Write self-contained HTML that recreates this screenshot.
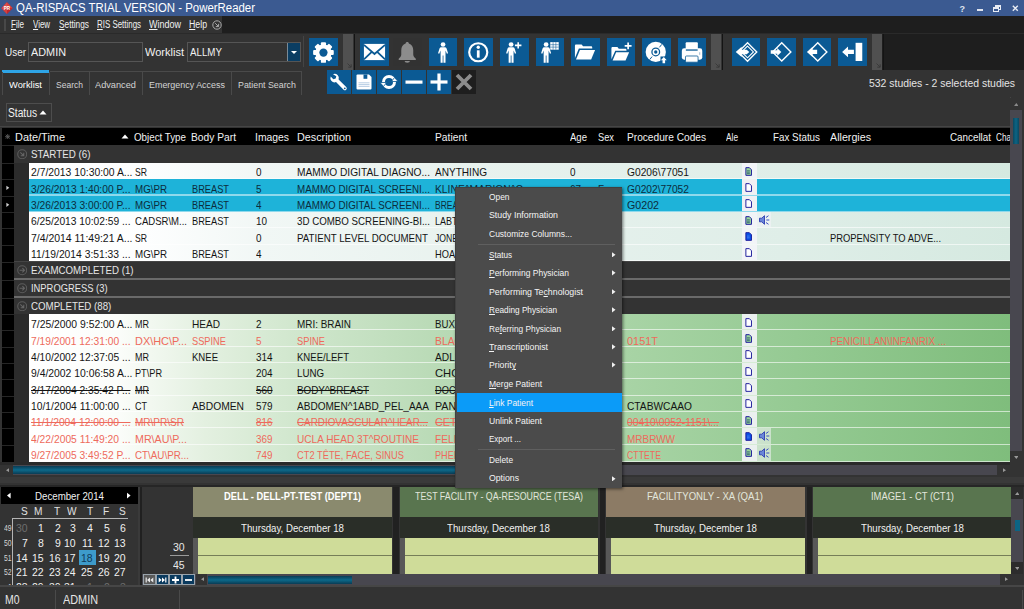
<!DOCTYPE html>
<html><head><meta charset="utf-8"><title>QA-RISPACS TRIAL VERSION - PowerReader</title>
<style>
html,body{margin:0;padding:0;}
body{width:1024px;height:609px;overflow:hidden;background:#333333;position:relative;
 font-family:"Liberation Sans",sans-serif;}
div,span,svg{position:absolute;box-sizing:border-box;}
.t{white-space:nowrap;line-height:16px;height:16px;transform-origin:0 50%;}
u{text-decoration:underline;text-underline-offset:1px;text-decoration-thickness:0.700px;}
.s{text-decoration:line-through;}
.tb{background:#0b5a94;}
</style></head><body>

<div style="left:0px;top:0px;width:1024px;height:16px;background:#3b5a91;"></div>
<svg style="left:0.800px;top:1.600px" width="12" height="12.400" viewBox="0 0 12 12.400"><polygon points="6,0.300 11.700,6.200 6,12.100 0.300,6.200" fill="#c4262c"/><polygon points="6,0.300 11.700,6.200 6,6.200 0.300,6.200" fill="#d8403e"/><polygon points="6,0.300 6,12.100 0.300,6.200" fill="#e05a52" opacity=".55"/><text x="6" y="8" font-family="Liberation Sans, sans-serif" font-size="4.600" font-weight="bold" fill="#fff" text-anchor="middle">PR</text></svg>
<span class="t" style="left:16.00px;top:0.20px;font-size:12px;color:#ffffff;transform:scaleX(0.9515);">QA-RISPACS TRIAL VERSION - PowerReader</span>
<span class="t" style="left:959.55px;top:0.50px;font-size:9px;color:#dfe4ee;transform:scaleX(1.0000);font-weight:bold;">?</span>
<div style="left:977.2px;top:9px;width:5.6px;height:2.2px;background:#dfe4ee;"></div>
<div style="left:995px;top:5px;width:6px;height:5px;border:1px solid #e8ecf4;border-top-width:2px;"></div>
<div style="left:993px;top:7px;width:6px;height:5px;background:#3b5a91;border:1px solid #e8ecf4;border-top-width:2px;"></div>
<svg style="left:1012.300px;top:5.200px" width="6.600" height="6.400" viewBox="0 0 9 9"><path d="M1 1L8 8M8 1L1 8" stroke="#e8ecf4" stroke-width="2"/></svg>
<div style="left:0px;top:16px;width:1024px;height:17px;background:#1e1e1e;"></div>
<div style="left:0px;top:16px;width:222px;height:17px;background:#333333;"></div>
<div style="left:3.5px;top:19px;width:2px;height:12px;background:#484848;"></div>
<span class="t" style="left:11.00px;top:17.00px;font-size:10px;color:#f1f1f1;transform:scaleX(0.9000);transform:scaleX(0.8068);"><u>F</u>ile</span>
<span class="t" style="left:33.00px;top:17.00px;font-size:10px;color:#f1f1f1;transform:scaleX(0.9000);transform:scaleX(0.7909);"><u>V</u>iew</span>
<span class="t" style="left:59.00px;top:17.00px;font-size:10px;color:#f1f1f1;transform:scaleX(0.9000);transform:scaleX(0.8303);"><u>S</u>ettings</span>
<span class="t" style="left:97.00px;top:17.00px;font-size:10px;color:#f1f1f1;transform:scaleX(0.9000);transform:scaleX(0.7916);"><u>R</u>IS Settings</span>
<span class="t" style="left:149.00px;top:17.00px;font-size:10px;color:#f1f1f1;transform:scaleX(0.9000);transform:scaleX(0.8997);"><u>W</u>indow</span>
<span class="t" style="left:189.00px;top:17.00px;font-size:10px;color:#f1f1f1;transform:scaleX(0.9000);transform:scaleX(0.8752);"><u>H</u>elp</span>
<svg style="left:212px;top:20px" width="10" height="10" viewBox="0 0 10 10"><circle cx="5" cy="5" r="4.2" fill="none" stroke="#aaa" stroke-width="1"/><path d="M3.2 3.2L6.4 6.4M6.6 3.8V6.6H3.8" stroke="#aaa" stroke-width="1" fill="none"/></svg>
<div style="left:0px;top:33px;width:1024px;height:37px;background:#333333;"></div>
<div style="left:882px;top:34px;width:142px;height:36px;background:#1e1e1e;"></div>
<div style="left:0px;top:33px;width:1024px;height:1px;background:#2a2a2a;"></div>
<span class="t" style="left:5.00px;top:43.60px;font-size:11px;color:#f1f1f1;transform:scaleX(0.9042);">User</span>
<div style="left:28px;top:42px;width:115px;height:20px;background:#333333;border:1px solid #555;"></div>
<span class="t" style="left:31.00px;top:44.00px;font-size:11px;color:#f1f1f1;transform:scaleX(0.9875);">ADMIN</span>
<span class="t" style="left:145.00px;top:43.60px;font-size:11px;color:#f1f1f1;transform:scaleX(1.0024);">Worklist</span>
<div style="left:187px;top:42px;width:114px;height:20px;background:#333333;border:1px solid #555;"></div>
<span class="t" style="left:190.00px;top:44.00px;font-size:11px;color:#f1f1f1;transform:scaleX(0.8871);">ALLMY</span>
<div style="left:287px;top:43px;width:13px;height:18px;background:#0a3d62;border-left:1px solid #7a8a96;"></div>
<svg style="left:290px;top:50px" width="8" height="5" viewBox="0 0 8 5"><polygon points="1,1 7,1 4,4" fill="#fff"/></svg>
<div style="left:343px;top:34px;width:10px;height:36px;background:#505050;"></div>
<svg style="left:347px;top:63px" width="5" height="5" viewBox="0 0 5 5"><path d="M0.5 0.5L3.800 3.800M4.200 1.200V4.200H1.200" stroke="#383838" stroke-width=".9" fill="none"/></svg>
<div style="left:354px;top:34px;width:1px;height:36px;background:#141414;"></div>
<div style="left:711px;top:34px;width:10px;height:36px;background:#505050;"></div>
<svg style="left:715px;top:63px" width="5" height="5" viewBox="0 0 5 5"><path d="M0.5 0.5L3.800 3.800M4.200 1.200V4.200H1.200" stroke="#383838" stroke-width=".9" fill="none"/></svg>
<div style="left:722px;top:34px;width:1px;height:36px;background:#141414;"></div>
<div style="left:872px;top:34px;width:10px;height:36px;background:#505050;"></div>
<svg style="left:876px;top:63px" width="5" height="5" viewBox="0 0 5 5"><path d="M0.5 0.5L3.800 3.800M4.200 1.200V4.200H1.200" stroke="#383838" stroke-width=".9" fill="none"/></svg>
<div style="left:883px;top:34px;width:1px;height:36px;background:#141414;"></div>
<div style="left:309px;top:37.8px;width:28.5px;height:28.5px;background:#0b5a94;"></div>
<svg style="left:309px;top:37.800px" width="28.500" height="28.500" viewBox="0 0 29 29"><g transform="translate(14.700 14.800)"><g fill="#fff"><rect x="-2.6" y="-10.5" width="5.2" height="21" rx="1" transform="rotate(0)"/><rect x="-2.6" y="-10.5" width="5.2" height="21" rx="1" transform="rotate(45)"/><rect x="-2.6" y="-10.5" width="5.2" height="21" rx="1" transform="rotate(90)"/><rect x="-2.6" y="-10.5" width="5.2" height="21" rx="1" transform="rotate(135)"/><circle r="8.3"/></g><circle r="4.2" fill="#0b5a94"/></g></svg>
<div style="left:360px;top:37.8px;width:28.5px;height:28.5px;background:#0b5a94;"></div>
<svg style="left:360px;top:37.800px" width="28.500" height="28.500" viewBox="0 0 29 29"><rect x="4" y="6" width="21.500" height="16.500" fill="#fff"/><path d="M4 7L14.750 16.300L25.500 7M4 21.800L12 14M25.500 21.800L17.500 14" stroke="#0b5a94" stroke-width="1.800" fill="none"/></svg>
<div style="left:393px;top:37.8px;width:28.5px;height:28.5px;background:#323232;"></div>
<svg style="left:393px;top:37.800px" width="28.500" height="28.500" viewBox="0 0 29 29"><path d="M14.500 4c-1 0-1.600.6-1.600 1.500-3 .9-4.500 3.600-4.500 7v4.300c0 1.900-1.300 3.200-2.600 4.200v1.300h17.400v-1.300c-1.300-1-2.600-2.300-2.600-4.200v-4.300c0-3.400-1.500-6.100-4.500-7 0-.9-.6-1.500-1.600-1.500z" fill="#8c8c8c"/><path d="M11.800 23.300h5.400a2.700 1.800 0 0 1-5.400 0z" fill="#8c8c8c"/></svg>
<div style="left:428.5px;top:37.8px;width:28.5px;height:28.5px;background:#0b5a94;"></div>
<svg style="left:428.5px;top:37.800px" width="28.500" height="28.500" viewBox="0 0 29 29"><g transform="translate(14.3 4.2) scale(1.0)" fill="#fff"><circle cx="0" cy="2.400" r="2.400"/><path d="M-1.800 5.200L1.800 5.200Q3.200 5.200 3.600 6.400L5.100 11.200L3.900 11.800L2.500 8.600L2.500 21L0.400 21L0.400 13.500L-0.400 13.500L-0.400 21L-2.500 21L-2.500 8.600L-3.900 11.800L-5.100 11.200L-3.600 6.400Q-3.200 5.200 -1.800 5.200Z"/></g></svg>
<div style="left:464px;top:37.8px;width:28.5px;height:28.5px;background:#0b5a94;"></div>
<svg style="left:464px;top:37.800px" width="28.500" height="28.500" viewBox="0 0 29 29"><circle cx="14.5" cy="14.5" r="9.2" fill="none" stroke="#fff" stroke-width="2.2"/><rect x="13.100" y="12.500" width="2.8" height="7.5" fill="#fff"/><circle cx="14.5" cy="9.400" r="1.700" fill="#fff"/></svg>
<div style="left:500px;top:37.8px;width:28.5px;height:28.5px;background:#0b5a94;"></div>
<svg style="left:500px;top:37.800px" width="28.500" height="28.500" viewBox="0 0 29 29"><g transform="translate(11.3 4.2) scale(1.0)" fill="#fff"><circle cx="0" cy="2.400" r="2.400"/><path d="M-1.800 5.200L1.800 5.200Q3.200 5.200 3.600 6.400L5.100 11.200L3.900 11.800L2.500 8.600L2.500 21L0.400 21L0.400 13.500L-0.400 13.500L-0.400 21L-2.500 21L-2.500 8.600L-3.900 11.800L-5.100 11.200L-3.600 6.400Q-3.200 5.200 -1.800 5.200Z"/></g><path d="M18.500 4.200v6.600M15.200 7.500h6.600" stroke="#fff" stroke-width="1.600"/></svg>
<div style="left:535.5px;top:37.8px;width:28.5px;height:28.5px;background:#0b5a94;"></div>
<svg style="left:535.5px;top:37.800px" width="28.500" height="28.500" viewBox="0 0 29 29"><g transform="translate(10.3 4.2) scale(1.0)" fill="#fff"><circle cx="0" cy="2.400" r="2.400"/><path d="M-1.800 5.200L1.800 5.200Q3.200 5.200 3.600 6.400L5.100 11.200L3.900 11.800L2.500 8.600L2.500 21L0.400 21L0.400 13.500L-0.400 13.500L-0.400 21L-2.500 21L-2.500 8.600L-3.900 11.800L-5.100 11.200L-3.600 6.400Q-3.200 5.200 -1.800 5.200Z"/></g><rect x="14.500" y="4.200" width="8.600" height="7.700" fill="#fff"/><path d="M14.500 6.800h8.600M14.500 9.300h8.600M17.400 4.200v7.700M20.200 4.200v7.700" stroke="#0b5a94" stroke-width=".55"/></svg>
<div style="left:571px;top:37.8px;width:28.5px;height:28.5px;background:#0b5a94;"></div>
<svg style="left:571px;top:37.800px" width="28.500" height="28.500" viewBox="0 0 29 29"><g transform="translate(-0.5 -0.7)"><path d="M4.500 8.500c0-.8.500-1.300 1.300-1.300h5.500l1.500 1.800h8c.8 0 1.300.5 1.300 1.300v1.200h-13.600l-4 9.500z" fill="#fff"/><path d="M9.600 13h15.400l-4 9.500h-15.400z" fill="#fff"/></g></svg>
<div style="left:606.5px;top:37.8px;width:28.5px;height:28.5px;background:#0b5a94;"></div>
<svg style="left:606.5px;top:37.800px" width="28.500" height="28.500" viewBox="0 0 29 29"><path d="M4.500 10.500c0-.8.500-1.300 1.300-1.300h4.800l1.400 1.700h6.500c.8 0 1.300.5 1.300 1.300v.8h-11.400l-3.900 8.500z" fill="#fff"/><path d="M9.300 14.400h13.200l-3.600 8.400h-13.200z" fill="#fff"/><path d="M21.500 4.500v7M18 8h7" stroke="#fff" stroke-width="1.700"/></svg>
<div style="left:642px;top:37.8px;width:28.5px;height:28.5px;background:#0b5a94;"></div>
<svg style="left:642px;top:37.800px" width="28.500" height="28.500" viewBox="0 0 29 29"><circle cx="14" cy="14.200" r="10.300" fill="#fff"/><circle cx="14" cy="14.200" r="3.900" fill="none" stroke="#0b5a94" stroke-width="1.300"/><circle cx="14" cy="14.200" r="1.700" fill="#0b5a94"/><path d="M17.700 9.500l2.400-3M7.900 21.900l2.400-3" stroke="#0b5a94" stroke-width="1"/><rect x="18.800" y="18.800" width="7" height="7" fill="#0b5a94"/><path d="M22.200 19.300l3 3.400h-1.700v3h-2.600v-3h-1.700z" fill="#fff"/></svg>
<div style="left:677.5px;top:37.8px;width:28.5px;height:28.5px;background:#0b5a94;"></div>
<svg style="left:677.5px;top:37.800px" width="28.500" height="28.500" viewBox="0 0 29 29"><rect x="7.800" y="4.400" width="12.400" height="7" rx="1" fill="#fff"/><rect x="3.900" y="10.500" width="20.800" height="11.600" rx="2.400" fill="#fff"/><rect x="8" y="11.600" width="12" height="1.300" fill="#0b5a94"/><rect x="7.600" y="18.300" width="12.800" height="6.300" rx="1" fill="#fff" stroke="#0b5a94" stroke-width=".8"/><rect x="21.600" y="14.500" width="1" height="2.600" fill="#9cb8d0"/></svg>
<div style="left:731.5px;top:37.8px;width:28.5px;height:28.5px;background:#0b5a94;"></div>
<svg style="left:731.5px;top:37.800px" width="28.500" height="28.500" viewBox="0 0 29 29"><path d="M15.8 4.799999999999999L25.200000000000003 14.2L15.8 23.6L6.4 14.2Z" fill="none" stroke="#fff" stroke-width="1.400"/><path d="M15.800 8.200L21.800 14.200L15.800 20.200L9.800 14.200Z" fill="none" stroke="#fff" stroke-width="1.100"/><path d="M3.800 14.200l6-5.200v2.900h5.200l2.600 2.300-2.600 2.300h-5.200v2.900z" fill="#fff"/></svg>
<div style="left:767px;top:37.8px;width:28.5px;height:28.5px;background:#0b5a94;"></div>
<svg style="left:767px;top:37.800px" width="28.500" height="28.500" viewBox="0 0 29 29"><path d="M15 4.899999999999999L24.3 14.2L15 23.5L5.699999999999999 14.2Z" fill="none" stroke="#fff" stroke-width="1.400"/><path d="M14.600 14.200l-4.200-4v2.300h-6.600v3.400h6.600v2.300z" fill="#fff"/></svg>
<div style="left:802.5px;top:37.8px;width:28.5px;height:28.5px;background:#0b5a94;"></div>
<svg style="left:802.5px;top:37.800px" width="28.500" height="28.500" viewBox="0 0 29 29"><path d="M15 4.899999999999999L24.3 14.2L15 23.5L5.699999999999999 14.2Z" fill="none" stroke="#fff" stroke-width="1.400"/><path d="M4 14.200l5.800-5.200v3h4.600v4.400h-4.600v3z" fill="#fff"/></svg>
<div style="left:838px;top:37.8px;width:28.5px;height:28.5px;background:#0b5a94;"></div>
<svg style="left:838px;top:37.800px" width="28.500" height="28.500" viewBox="0 0 29 29"><rect x="17.900" y="4.900" width="6.800" height="18.500" fill="#fff"/><path d="M4.200 14.200l6-5.500v3.300h6v4.400h-6v3.300z" fill="#fff"/></svg>
<div style="left:0px;top:70px;width:1024px;height:58px;background:#333333;"></div>
<span class="t" style="left:9.00px;top:76.70px;font-size:9.7px;color:#ffffff;transform:scaleX(0.9618);">Worklist</span>
<span class="t" style="left:55.70px;top:76.70px;font-size:9.7px;color:#d4d4d4;transform:scaleX(0.8785);">Search</span>
<span class="t" style="left:95.30px;top:76.70px;font-size:9.7px;color:#d4d4d4;transform:scaleX(0.9503);">Advanced</span>
<span class="t" style="left:148.70px;top:76.70px;font-size:9.7px;color:#d4d4d4;transform:scaleX(0.9214);">Emergency Access</span>
<span class="t" style="left:237.90px;top:76.70px;font-size:9.7px;color:#d4d4d4;transform:scaleX(0.9116);">Patient Search</span>
<div style="left:2px;top:70px;width:47px;height:3px;background:#2ea4e6;"></div>
<div style="left:49.5px;top:71px;width:252.5px;height:1px;background:#4a4a4a;"></div>
<div style="left:1.5px;top:72px;width:1px;height:23px;background:#4a4a4a;"></div>
<div style="left:48.8px;top:72px;width:1px;height:23px;background:#4a4a4a;"></div>
<div style="left:89px;top:72px;width:1px;height:23px;background:#4a4a4a;"></div>
<div style="left:142px;top:72px;width:1px;height:23px;background:#4a4a4a;"></div>
<div style="left:230.7px;top:72px;width:1px;height:23px;background:#4a4a4a;"></div>
<div style="left:301.2px;top:72px;width:1px;height:23px;background:#4a4a4a;"></div>
<div style="left:303px;top:36px;width:1px;height:31px;background:#444444;"></div>
<div style="left:327px;top:70px;width:24px;height:24px;background:#0b5a94;"></div>
<svg style="left:327px;top:70px" width="24" height="24" viewBox="0 0 24 24"><path d="M6 4.200a4.200 4.200 0 0 1 5.600 5.300l7.600 7.600a1.800 1.800 0 0 1-2.600 2.600l-7.600-7.600a4.200 4.200 0 0 1-5.300-5.600l2.700 2.700 2.300-.6.600-2.300z" fill="#fff"/><circle cx="17.800" cy="18.300" r=".9" fill="#0b5a94"/></svg>
<div style="left:352px;top:70px;width:24px;height:24px;background:#0b5a94;"></div>
<svg style="left:352px;top:70px" width="24" height="24" viewBox="0 0 24 24"><path d="M4.500 5.500q0-1 1-1h11.500l2.500 2.500v11.500q0 1-1 1h-13q-1 0-1-1z" fill="#fff"/><rect x="11.500" y="4.500" width="3.800" height="4.300" fill="#0b5a94"/><path d="M6.500 12.800h11M6.500 14.600h11M6.500 16.400h11" stroke="#a4c0dc" stroke-width=".8"/></svg>
<div style="left:377px;top:70px;width:24px;height:24px;background:#0b5a94;"></div>
<svg style="left:377px;top:70px" width="24" height="24" viewBox="0 0 24 24"><circle cx="12" cy="12" r="5.500" fill="none" stroke="#fff" stroke-width="3"/><path d="M3 12.500h6.500l-3 4z" fill="#fff" stroke="#0b5a94" stroke-width=".8"/><path d="M21 11.500h-6.500l3-4z" fill="#fff" stroke="#0b5a94" stroke-width=".8"/></svg>
<div style="left:402px;top:70px;width:24px;height:24px;background:#0b5a94;"></div>
<svg style="left:402px;top:70px" width="24" height="24" viewBox="0 0 24 24"><rect x="3.500" y="10.500" width="17" height="3.200" fill="#fff"/></svg>
<div style="left:427px;top:70px;width:24px;height:24px;background:#0b5a94;"></div>
<svg style="left:427px;top:70px" width="24" height="24" viewBox="0 0 24 24"><rect x="3.500" y="10.400" width="17" height="3.200" fill="#fff"/><rect x="10.400" y="3.500" width="3.200" height="17" fill="#fff"/></svg>
<div style="left:452px;top:70px;width:24px;height:24px;background:#1e1e1e;"></div>
<svg style="left:452px;top:70px" width="24" height="24" viewBox="0 0 24 24"><path d="M5 5L19 19M19 5L5 19" stroke="#8c8c8c" stroke-width="3.800"/></svg>
<span class="t" style="left:869.00px;top:75.00px;font-size:11px;color:#e4e4e4;transform:scaleX(0.9475);">532 studies - 2 selected studies</span>
<div style="left:6px;top:103px;width:46px;height:19px;background:#333333;border:1px solid #4d4d4d;"></div>
<span class="t" style="left:8.00px;top:105.00px;font-size:12px;color:#f1f1f1;transform:scaleX(0.8525);">Status</span>
<svg style="left:39px;top:110px" width="8" height="5" viewBox="0 0 8 5"><polygon points="0.5,4.500 4,0.500 7.500,4.500" fill="#fff"/></svg>
<div style="left:0px;top:126px;width:1010px;height:1px;background:#454545;"></div>
<div style="left:2px;top:127.5px;width:1008px;height:17.5px;background:#000;"></div>
<svg style="left:5px;top:133.600px" width="5.400" height="5.400" viewBox="0 0 7 7"><path d="M3.500 0v7M0 3.500h7M1 1l5 5M6 1l-5 5" stroke="#5e5e5e" stroke-width="1.100"/></svg>
<span class="t" style="left:15.40px;top:129.00px;font-size:11px;color:#f1f1f1;transform:scaleX(0.9935);">Date/Time</span>
<span class="t" style="left:134.40px;top:129.00px;font-size:11px;color:#f1f1f1;transform:scaleX(0.8889);">Object Type</span>
<span class="t" style="left:191.40px;top:129.00px;font-size:11px;color:#f1f1f1;transform:scaleX(0.9316);">Body Part</span>
<span class="t" style="left:255.40px;top:129.00px;font-size:11px;color:#f1f1f1;transform:scaleX(0.9426);">Images</span>
<span class="t" style="left:297.40px;top:129.00px;font-size:11px;color:#f1f1f1;transform:scaleX(0.9814);">Description</span>
<span class="t" style="left:435.40px;top:129.00px;font-size:11px;color:#f1f1f1;transform:scaleX(0.9344);">Patient</span>
<span class="t" style="left:570.40px;top:129.00px;font-size:11px;color:#f1f1f1;transform:scaleX(0.8686);">Age</span>
<span class="t" style="left:598.40px;top:129.00px;font-size:11px;color:#f1f1f1;transform:scaleX(0.8441);">Sex</span>
<span class="t" style="left:627.40px;top:129.00px;font-size:11px;color:#f1f1f1;transform:scaleX(0.9228);">Procedure Codes</span>
<span class="t" style="left:726.40px;top:129.00px;font-size:11px;color:#f1f1f1;transform:scaleX(0.7548);">Ale</span>
<span class="t" style="left:773.40px;top:129.00px;font-size:11px;color:#f1f1f1;transform:scaleX(0.8939);">Fax Status</span>
<span class="t" style="left:830.40px;top:129.00px;font-size:11px;color:#f1f1f1;transform:scaleX(0.9719);">Allergies</span>
<span class="t" style="left:949.90px;top:129.00px;font-size:11px;color:#f1f1f1;transform:scaleX(0.8941);">Cancellat</span>
<span class="t" style="left:995.90px;top:129.00px;font-size:11px;color:#f1f1f1;transform:scaleX(0.7433);">Cha</span>
<div style="left:188px;top:128px;width:3px;height:16px;background:#000;"></div>
<div style="left:740px;top:128px;width:5px;height:16px;background:#000;"></div>
<svg style="left:121px;top:134px" width="8" height="5" viewBox="0 0 8 5"><polygon points="0.500,4.500 4,0.500 7.500,4.500" fill="#fff"/></svg>
<div style="left:2px;top:145px;width:12px;height:318px;background:#000;"></div>
<div style="left:14px;top:163px;width:15px;height:98px;background:#2b2b2b;"></div>
<div style="left:14px;top:314px;width:15px;height:149px;background:#2b2b2b;"></div>
<div style="left:14px;top:145px;width:996px;height:18px;background:#333333;"></div>
<svg style="left:16.500px;top:148.8px" width="10.400" height="10.400" viewBox="0 0 10 10"><circle cx="5" cy="5" r="4.300" fill="none" stroke="#5c5c5c" stroke-width="1"/><path d="M3.200 3.200L6.300 6.300M6.500 3.600V6.500H3.600" stroke="#666" stroke-width="1" fill="none"/></svg>
<span class="t" style="left:30.90px;top:145.90px;font-size:11px;color:#e6e6e6;transform:scaleX(0.8889);">STARTED (6)</span>
<div style="left:29px;top:163.1px;width:981px;height:16.333px;background:linear-gradient(to right,#ffffff 0%,#fdfefe 12%,#f1f7f5 24%,#e8f2ee 45%,#dfeee8 77%,#d5e9e0 100%);"></div>
<div style="left:29px;top:178.433px;width:981px;height:1px;background:rgba(255,255,255,.6);"></div>
<span class="t" style="left:30.80px;top:164.40px;font-size:11px;color:#141414;transform:scaleX(0.9429);">2/7/2013 10:30:00 A...</span>
<span class="t" style="left:134.60px;top:164.40px;font-size:11px;color:#141414;transform:scaleX(0.7853);">SR</span>
<span class="t" style="left:255.50px;top:164.40px;font-size:11px;color:#141414;transform:scaleX(0.9000);">0</span>
<span class="t" style="left:297.40px;top:164.40px;font-size:11px;color:#141414;transform:scaleX(0.9261);">MAMMO DIGITAL DIAGNO...</span>
<span class="t" style="left:435.20px;top:164.40px;font-size:11px;color:#141414;transform:scaleX(0.9149);">ANYTHING</span>
<span class="t" style="left:570.40px;top:164.40px;font-size:11px;color:#141414;transform:scaleX(0.9000);">0</span>
<span class="t" style="left:627.20px;top:164.40px;font-size:11px;color:#141414;transform:scaleX(0.9299);">G0206\77051</span>
<div style="left:742px;top:163.1px;width:15px;height:15.332999999999998px;background:rgba(244,244,248,.9);"></div>
<svg style="left:745.3px;top:166.6px" width="7" height="9" viewBox="0 0 8 10"><path d="M1 .6h4l2.400 2.400v6.400h-6.400z" fill="#9ad59a" stroke="#1c1c9c" stroke-width="1.100"/><path d="M2.300 4.200h3.200M2.300 5.800h3.200M2.300 7.400h3.200" stroke="#1c4a6c" stroke-width=".8"/></svg>
<div style="left:29px;top:179.433px;width:981px;height:16.333px;background:#1eb3d9;"></div>
<div style="left:29px;top:194.266px;width:981px;height:2px;background:rgba(255,255,255,.5);"></div>
<span class="t" style="left:30.80px;top:180.73px;font-size:11px;color:#0c2c3c;transform:scaleX(0.9313);">3/26/2013 1:40:00 P...</span>
<span class="t" style="left:134.60px;top:180.73px;font-size:11px;color:#0c2c3c;transform:scaleX(0.8875);">MG\PR</span>
<span class="t" style="left:191.50px;top:180.73px;font-size:11px;color:#0c2c3c;transform:scaleX(0.8407);">BREAST</span>
<span class="t" style="left:255.50px;top:180.73px;font-size:11px;color:#0c2c3c;transform:scaleX(0.9000);">5</span>
<span class="t" style="left:297.40px;top:180.73px;font-size:11px;color:#0c2c3c;transform:scaleX(0.8919);">MAMMO DIGITAL SCREENI...</span>
<span class="t" style="left:435.20px;top:180.73px;font-size:11px;color:#0c2c3c;transform:scaleX(0.9356);">KLINE^MARION^C</span>
<span class="t" style="left:570.40px;top:180.73px;font-size:11px;color:#0c2c3c;transform:scaleX(0.9000);">67</span>
<span class="t" style="left:598.40px;top:180.73px;font-size:11px;color:#0c2c3c;transform:scaleX(0.9000);">F</span>
<span class="t" style="left:627.20px;top:180.73px;font-size:11px;color:#0c2c3c;transform:scaleX(0.9299);">G0202\77052</span>
<div style="left:742px;top:179.433px;width:15px;height:15.332999999999998px;background:#f0f0f3;"></div>
<svg style="left:745.3px;top:182.933px" width="7" height="9" viewBox="0 0 8 10"><path d="M1 .6h4l2.400 2.400v6.400h-6.400z" fill="#ffffff" stroke="#1c1c9c" stroke-width="1.100"/></svg>
<div style="left:29px;top:195.766px;width:981px;height:16.333px;background:#1eb3d9;"></div>
<div style="left:29px;top:210.599px;width:981px;height:2px;background:rgba(255,255,255,.5);"></div>
<span class="t" style="left:30.80px;top:197.07px;font-size:11px;color:#0c2c3c;transform:scaleX(0.9313);">3/26/2013 3:00:00 P...</span>
<span class="t" style="left:134.60px;top:197.07px;font-size:11px;color:#0c2c3c;transform:scaleX(0.8875);">MG\PR</span>
<span class="t" style="left:191.50px;top:197.07px;font-size:11px;color:#0c2c3c;transform:scaleX(0.8407);">BREAST</span>
<span class="t" style="left:255.50px;top:197.07px;font-size:11px;color:#0c2c3c;transform:scaleX(0.9000);">4</span>
<span class="t" style="left:297.40px;top:197.07px;font-size:11px;color:#0c2c3c;transform:scaleX(0.8919);">MAMMO DIGITAL SCREENI...</span>
<span class="t" style="left:435.20px;top:197.07px;font-size:11px;color:#0c2c3c;transform:scaleX(0.7764);">BREAST^TEST</span>
<span class="t" style="left:627.20px;top:197.07px;font-size:11px;color:#0c2c3c;transform:scaleX(0.9689);">G0202</span>
<div style="left:742px;top:195.766px;width:15px;height:15.332999999999998px;background:#f0f0f3;"></div>
<svg style="left:745.3px;top:199.266px" width="7" height="9" viewBox="0 0 8 10"><path d="M1 .6h4l2.400 2.400v6.400h-6.400z" fill="#ffffff" stroke="#1c1c9c" stroke-width="1.100"/></svg>
<div style="left:29px;top:212.099px;width:981px;height:16.333px;background:linear-gradient(to right,#ffffff 0%,#fdfefe 12%,#f1f7f5 24%,#e8f2ee 45%,#dfeee8 77%,#d5e9e0 100%);"></div>
<div style="left:29px;top:227.432px;width:981px;height:1px;background:rgba(255,255,255,.6);"></div>
<span class="t" style="left:30.80px;top:213.40px;font-size:11px;color:#141414;transform:scaleX(0.9296);">6/25/2013 10:02:59 ...</span>
<span class="t" style="left:134.60px;top:213.40px;font-size:11px;color:#141414;transform:scaleX(0.8682);">CADSR\M...</span>
<span class="t" style="left:191.50px;top:213.40px;font-size:11px;color:#141414;transform:scaleX(0.8407);">BREAST</span>
<span class="t" style="left:255.50px;top:213.40px;font-size:11px;color:#141414;transform:scaleX(0.9000);">10</span>
<span class="t" style="left:297.40px;top:213.40px;font-size:11px;color:#141414;transform:scaleX(0.8846);">3D COMBO SCREENING-BI...</span>
<span class="t" style="left:435.20px;top:213.40px;font-size:11px;color:#141414;transform:scaleX(0.8179);">LABTEST</span>
<div style="left:742px;top:212.099px;width:15px;height:15.332999999999998px;background:rgba(244,244,248,.9);"></div>
<svg style="left:745.3px;top:215.599px" width="7" height="9" viewBox="0 0 8 10"><path d="M1 .6h4l2.400 2.400v6.400h-6.400z" fill="#9ad59a" stroke="#1c1c9c" stroke-width="1.100"/><path d="M2.300 4.200h3.200M2.300 5.800h3.200M2.300 7.400h3.200" stroke="#1c4a6c" stroke-width=".8"/></svg>
<div style="left:757px;top:212.099px;width:14px;height:15.332999999999998px;background:rgba(244,244,248,.55);"></div>
<svg style="left:759px;top:215.099px" width="11" height="10" viewBox="0 0 11 10"><path d="M.5 3.200h2.200l2.800-2.500v8.600l-2.800-2.500h-2.200z" fill="#6a86d8" stroke="#2c3cb0" stroke-width=".9"/><path d="M7 2.500l2.500-1.800M7.300 5h3M7 7.500l2.500 1.800" stroke="#3c50c0" stroke-width="1"/></svg>
<div style="left:29px;top:228.432px;width:981px;height:16.333px;background:linear-gradient(to right,#ffffff 0%,#fdfefe 12%,#f1f7f5 24%,#e8f2ee 45%,#dfeee8 77%,#d5e9e0 100%);"></div>
<div style="left:29px;top:243.765px;width:981px;height:1px;background:rgba(255,255,255,.6);"></div>
<span class="t" style="left:30.80px;top:229.73px;font-size:11px;color:#141414;transform:scaleX(0.9501);">7/4/2014 11:49:21 A...</span>
<span class="t" style="left:134.60px;top:229.73px;font-size:11px;color:#141414;transform:scaleX(0.7853);">SR</span>
<span class="t" style="left:255.50px;top:229.73px;font-size:11px;color:#141414;transform:scaleX(0.9000);">0</span>
<span class="t" style="left:297.40px;top:229.73px;font-size:11px;color:#141414;transform:scaleX(0.8844);">PATIENT LEVEL DOCUMENT</span>
<span class="t" style="left:435.20px;top:229.73px;font-size:11px;color:#141414;transform:scaleX(0.7870);">JONES^TOM</span>
<span class="t" style="left:830.40px;top:229.73px;font-size:11px;color:#141414;transform:scaleX(0.8525);">PROPENSITY TO ADVE...</span>
<div style="left:742px;top:228.432px;width:15px;height:15.332999999999998px;background:rgba(244,244,248,.9);"></div>
<svg style="left:745.3px;top:231.932px" width="7" height="9" viewBox="0 0 8 10"><path d="M1 .6h4l2.400 2.400v6.400h-6.400z" fill="#0a52e6" stroke="#1c1c9c" stroke-width="1.100"/><path d="M2.300 4.500h3M2.300 6.500h3" stroke="#5c8cf4" stroke-width=".8"/></svg>
<div style="left:29px;top:244.765px;width:981px;height:16.33299999999997px;background:linear-gradient(to right,#ffffff 0%,#fdfefe 12%,#f1f7f5 24%,#e8f2ee 45%,#dfeee8 77%,#d5e9e0 100%);"></div>
<div style="left:29px;top:260.09799999999996px;width:981px;height:1px;background:rgba(255,255,255,.6);"></div>
<span class="t" style="left:30.80px;top:246.06px;font-size:11px;color:#141414;transform:scaleX(0.9367);">11/19/2014 3:51:33 ...</span>
<span class="t" style="left:134.60px;top:246.06px;font-size:11px;color:#141414;transform:scaleX(0.8875);">MG\PR</span>
<span class="t" style="left:191.50px;top:246.06px;font-size:11px;color:#141414;transform:scaleX(0.8407);">BREAST</span>
<span class="t" style="left:255.50px;top:246.06px;font-size:11px;color:#141414;transform:scaleX(0.9000);">4</span>
<span class="t" style="left:435.20px;top:246.06px;font-size:11px;color:#141414;transform:scaleX(0.8429);">HOANG</span>
<div style="left:742px;top:244.765px;width:15px;height:15.33299999999997px;background:rgba(244,244,248,.9);"></div>
<svg style="left:745.3px;top:248.265px" width="7" height="9" viewBox="0 0 8 10"><path d="M1 .6h4l2.400 2.400v6.400h-6.400z" fill="#ffffff" stroke="#1c1c9c" stroke-width="1.100"/></svg>
<div style="left:14px;top:261px;width:996px;height:1px;background:#454545;"></div>
<div style="left:14px;top:262px;width:996px;height:17px;background:#333333;"></div>
<svg style="left:16.500px;top:265.3px" width="10.400" height="10.400" viewBox="0 0 10 10"><circle cx="5" cy="5" r="4.300" fill="none" stroke="#5c5c5c" stroke-width="1"/><path d="M2.500 5H7M5.200 3L7.200 5L5.200 7" stroke="#666" stroke-width="1" fill="none"/></svg>
<span class="t" style="left:30.90px;top:262.40px;font-size:11px;color:#e6e6e6;transform:scaleX(0.8835);">EXAMCOMPLETED (1)</span>
<div style="left:14px;top:278.4px;width:996px;height:2px;background:#6a6a6a;"></div>
<div style="left:14px;top:280.5px;width:996px;height:16px;background:#333333;"></div>
<svg style="left:16.500px;top:283.3px" width="10.400" height="10.400" viewBox="0 0 10 10"><circle cx="5" cy="5" r="4.300" fill="none" stroke="#5c5c5c" stroke-width="1"/><path d="M2.500 5H7M5.200 3L7.200 5L5.200 7" stroke="#666" stroke-width="1" fill="none"/></svg>
<span class="t" style="left:30.90px;top:280.40px;font-size:11px;color:#e6e6e6;transform:scaleX(0.8514);">INPROGRESS (3)</span>
<div style="left:14px;top:296.3px;width:996px;height:2px;background:#6a6a6a;"></div>
<div style="left:14px;top:298.5px;width:996px;height:15.5px;background:#333333;"></div>
<svg style="left:16.500px;top:301.05px" width="10.400" height="10.400" viewBox="0 0 10 10"><circle cx="5" cy="5" r="4.300" fill="none" stroke="#5c5c5c" stroke-width="1"/><path d="M3.200 3.200L6.300 6.300M6.500 3.600V6.500H3.600" stroke="#666" stroke-width="1" fill="none"/></svg>
<span class="t" style="left:30.90px;top:298.15px;font-size:11px;color:#e6e6e6;transform:scaleX(0.8817);">COMPLETED (88)</span>
<div style="left:29px;top:314.1px;width:981px;height:16.33299999999997px;background:linear-gradient(to right,#ffffff 0%,#fbfdfa 9%,#e3f0e0 18%,#cfe6cc 28%,#b7d9b4 43%,#a9d4a6 60%,#93c991 80%,#7fbd7c 100%);"></div>
<div style="left:29px;top:329.433px;width:981px;height:1px;background:rgba(255,255,255,.6);"></div>
<span class="t" style="left:30.80px;top:316.25px;font-size:11px;color:#141414;transform:scaleX(0.9429);">7/25/2000 9:52:00 A...</span>
<span class="t" style="left:134.60px;top:316.25px;font-size:11px;color:#141414;transform:scaleX(0.8184);">MR</span>
<span class="t" style="left:191.50px;top:316.25px;font-size:11px;color:#141414;transform:scaleX(0.9162);">HEAD</span>
<span class="t" style="left:255.50px;top:316.25px;font-size:11px;color:#141414;transform:scaleX(0.9000);">2</span>
<span class="t" style="left:297.40px;top:316.25px;font-size:11px;color:#141414;transform:scaleX(0.9016);">MRI: BRAIN</span>
<span class="t" style="left:435.20px;top:316.25px;font-size:11px;color:#141414;transform:scaleX(0.8765);">BUXTON</span>
<div style="left:742px;top:314.1px;width:15px;height:15.33299999999997px;background:rgba(244,244,248,.9);"></div>
<svg style="left:745.3px;top:317.6px" width="7" height="9" viewBox="0 0 8 10"><path d="M1 .6h4l2.400 2.400v6.400h-6.400z" fill="#ffffff" stroke="#1c1c9c" stroke-width="1.100"/></svg>
<div style="left:29px;top:330.433px;width:981px;height:16.333000000000027px;background:linear-gradient(to right,#ffffff 0%,#fbfdfa 9%,#e3f0e0 18%,#cfe6cc 28%,#b7d9b4 43%,#a9d4a6 60%,#93c991 80%,#7fbd7c 100%);"></div>
<div style="left:29px;top:345.766px;width:981px;height:1px;background:rgba(255,255,255,.6);"></div>
<span class="t" style="left:30.80px;top:332.58px;font-size:11px;color:#ee6a5c;transform:scaleX(0.9296);">7/19/2001 12:31:00 ...</span>
<span class="t" style="left:134.60px;top:332.58px;font-size:11px;color:#ee6a5c;transform:scaleX(0.9930);">DX\HC\P...</span>
<span class="t" style="left:191.50px;top:332.58px;font-size:11px;color:#ee6a5c;transform:scaleX(0.8427);">SSPINE</span>
<span class="t" style="left:255.50px;top:332.58px;font-size:11px;color:#ee6a5c;transform:scaleX(0.9000);">5</span>
<span class="t" style="left:297.40px;top:332.58px;font-size:11px;color:#ee6a5c;transform:scaleX(0.8482);">SPINE</span>
<span class="t" style="left:435.20px;top:332.58px;font-size:11px;color:#ee6a5c;transform:scaleX(0.9426);">BLACK</span>
<span class="t" style="left:627.20px;top:332.58px;font-size:11px;color:#ee6a5c;transform:scaleX(0.9939);">0151T</span>
<span class="t" style="left:830.40px;top:332.58px;font-size:11px;color:#ee6a5c;transform:scaleX(0.8909);">PENICILLAN\INFANRIX ...</span>
<div style="left:742px;top:330.433px;width:15px;height:15.333000000000027px;background:rgba(244,244,248,.9);"></div>
<svg style="left:745.3px;top:333.933px" width="7" height="9" viewBox="0 0 8 10"><path d="M1 .6h4l2.400 2.400v6.400h-6.400z" fill="#9ad59a" stroke="#1c1c9c" stroke-width="1.100"/><path d="M2.300 4.200h3.200M2.300 5.800h3.200M2.300 7.400h3.200" stroke="#1c4a6c" stroke-width=".8"/></svg>
<div style="left:29px;top:346.766px;width:981px;height:16.333000000000027px;background:linear-gradient(to right,#ffffff 0%,#fbfdfa 9%,#e3f0e0 18%,#cfe6cc 28%,#b7d9b4 43%,#a9d4a6 60%,#93c991 80%,#7fbd7c 100%);"></div>
<div style="left:29px;top:362.09900000000005px;width:981px;height:1px;background:rgba(255,255,255,.6);"></div>
<span class="t" style="left:30.80px;top:348.92px;font-size:11px;color:#141414;transform:scaleX(0.9296);">4/10/2002 12:37:05 ...</span>
<span class="t" style="left:134.60px;top:348.92px;font-size:11px;color:#141414;transform:scaleX(0.8184);">MR</span>
<span class="t" style="left:191.50px;top:348.92px;font-size:11px;color:#141414;transform:scaleX(0.8680);">KNEE</span>
<span class="t" style="left:255.50px;top:348.92px;font-size:11px;color:#141414;transform:scaleX(0.9000);">314</span>
<span class="t" style="left:297.40px;top:348.92px;font-size:11px;color:#141414;transform:scaleX(0.8681);">KNEE/LEFT</span>
<span class="t" style="left:435.20px;top:348.92px;font-size:11px;color:#141414;transform:scaleX(0.9270);">ADLER</span>
<div style="left:742px;top:346.766px;width:15px;height:15.333000000000027px;background:rgba(244,244,248,.9);"></div>
<svg style="left:745.3px;top:350.266px" width="7" height="9" viewBox="0 0 8 10"><path d="M1 .6h4l2.400 2.400v6.400h-6.400z" fill="#ffffff" stroke="#1c1c9c" stroke-width="1.100"/></svg>
<div style="left:29px;top:363.09900000000005px;width:981px;height:16.33299999999997px;background:linear-gradient(to right,#ffffff 0%,#fbfdfa 9%,#e3f0e0 18%,#cfe6cc 28%,#b7d9b4 43%,#a9d4a6 60%,#93c991 80%,#7fbd7c 100%);"></div>
<div style="left:29px;top:378.432px;width:981px;height:1px;background:rgba(255,255,255,.6);"></div>
<span class="t" style="left:30.80px;top:365.25px;font-size:11px;color:#141414;transform:scaleX(0.9429);">9/4/2002 10:06:58 A...</span>
<span class="t" style="left:134.60px;top:365.25px;font-size:11px;color:#141414;transform:scaleX(0.8335);">PT\PR</span>
<span class="t" style="left:255.50px;top:365.25px;font-size:11px;color:#141414;transform:scaleX(0.9000);">204</span>
<span class="t" style="left:297.40px;top:365.25px;font-size:11px;color:#141414;transform:scaleX(0.8835);">LUNG</span>
<span class="t" style="left:435.20px;top:365.25px;font-size:11px;color:#141414;transform:scaleX(1.0182);">CHOI</span>
<div style="left:742px;top:363.09900000000005px;width:15px;height:15.33299999999997px;background:rgba(244,244,248,.9);"></div>
<svg style="left:745.3px;top:366.59900000000005px" width="7" height="9" viewBox="0 0 8 10"><path d="M1 .6h4l2.400 2.400v6.400h-6.400z" fill="#ffffff" stroke="#1c1c9c" stroke-width="1.100"/></svg>
<div style="left:29px;top:379.432px;width:981px;height:16.33299999999997px;background:linear-gradient(to right,#ffffff 0%,#fbfdfa 9%,#e3f0e0 18%,#cfe6cc 28%,#b7d9b4 43%,#a9d4a6 60%,#93c991 80%,#7fbd7c 100%);"></div>
<div style="left:29px;top:394.765px;width:981px;height:1px;background:rgba(255,255,255,.6);"></div>
<span class="t" style="left:30.80px;top:381.58px;font-size:11px;color:#141414;transform:scaleX(0.9313);text-decoration:line-through;">3/17/2004 2:35:42 P...</span>
<span class="t" style="left:134.60px;top:381.58px;font-size:11px;color:#141414;transform:scaleX(0.8184);text-decoration:line-through;">MR</span>
<span class="t" style="left:255.50px;top:381.58px;font-size:11px;color:#141414;transform:scaleX(0.9000);text-decoration:line-through;">560</span>
<span class="t" style="left:297.40px;top:381.58px;font-size:11px;color:#141414;transform:scaleX(0.8961);text-decoration:line-through;">BODY^BREAST</span>
<span class="t" style="left:435.20px;top:381.58px;font-size:11px;color:#141414;transform:scaleX(0.8427);text-decoration:line-through;">DOCTOR</span>
<div style="left:742px;top:379.432px;width:15px;height:15.33299999999997px;background:rgba(244,244,248,.9);"></div>
<svg style="left:745.3px;top:382.932px" width="7" height="9" viewBox="0 0 8 10"><path d="M1 .6h4l2.400 2.400v6.400h-6.400z" fill="#ffffff" stroke="#1c1c9c" stroke-width="1.100"/></svg>
<div style="left:29px;top:395.765px;width:981px;height:16.333000000000027px;background:linear-gradient(to right,#ffffff 0%,#fbfdfa 9%,#e3f0e0 18%,#cfe6cc 28%,#b7d9b4 43%,#a9d4a6 60%,#93c991 80%,#7fbd7c 100%);"></div>
<div style="left:29px;top:411.098px;width:981px;height:1px;background:rgba(255,255,255,.6);"></div>
<span class="t" style="left:30.80px;top:397.91px;font-size:11px;color:#141414;transform:scaleX(0.9367);">10/1/2004 11:00:00 ...</span>
<span class="t" style="left:134.60px;top:397.91px;font-size:11px;color:#141414;transform:scaleX(0.8184);">CT</span>
<span class="t" style="left:191.50px;top:397.91px;font-size:11px;color:#141414;transform:scaleX(0.9350);">ABDOMEN</span>
<span class="t" style="left:255.50px;top:397.91px;font-size:11px;color:#141414;transform:scaleX(0.9000);">579</span>
<span class="t" style="left:297.40px;top:397.91px;font-size:11px;color:#141414;transform:scaleX(0.9132);">ABDOMEN^1ABD_PEL_AAA</span>
<span class="t" style="left:435.20px;top:397.91px;font-size:11px;color:#141414;transform:scaleX(0.9708);">PANDA</span>
<span class="t" style="left:627.20px;top:397.91px;font-size:11px;color:#141414;transform:scaleX(0.9276);">CTABWCAAO</span>
<div style="left:742px;top:395.765px;width:15px;height:15.333000000000027px;background:rgba(244,244,248,.9);"></div>
<svg style="left:745.3px;top:399.265px" width="7" height="9" viewBox="0 0 8 10"><path d="M1 .6h4l2.400 2.400v6.400h-6.400z" fill="#ffffff" stroke="#1c1c9c" stroke-width="1.100"/></svg>
<div style="left:29px;top:412.098px;width:981px;height:16.333000000000027px;background:linear-gradient(to right,#ffffff 0%,#fbfdfa 9%,#e3f0e0 18%,#cfe6cc 28%,#b7d9b4 43%,#a9d4a6 60%,#93c991 80%,#7fbd7c 100%);"></div>
<div style="left:29px;top:427.43100000000004px;width:981px;height:1px;background:rgba(255,255,255,.6);"></div>
<span class="t" style="left:30.80px;top:414.25px;font-size:11px;color:#ee6a5c;transform:scaleX(0.9367);text-decoration:line-through;">11/1/2004 12:00:00 ...</span>
<span class="t" style="left:134.60px;top:414.25px;font-size:11px;color:#ee6a5c;transform:scaleX(0.9111);text-decoration:line-through;">MR\PR\SR</span>
<span class="t" style="left:255.50px;top:414.25px;font-size:11px;color:#ee6a5c;transform:scaleX(0.9000);text-decoration:line-through;">816</span>
<span class="t" style="left:297.40px;top:414.25px;font-size:11px;color:#ee6a5c;transform:scaleX(0.8963);text-decoration:line-through;">CARDIOVASCULAR^HEAR...</span>
<span class="t" style="left:435.20px;top:414.25px;font-size:11px;color:#ee6a5c;transform:scaleX(0.9817);text-decoration:line-through;">CETA</span>
<span class="t" style="left:627.20px;top:414.25px;font-size:11px;color:#ee6a5c;transform:scaleX(0.9421);text-decoration:line-through;">00410\0052-1151\...</span>
<div style="left:742px;top:412.098px;width:15px;height:15.333000000000027px;background:rgba(244,244,248,.9);"></div>
<svg style="left:745.3px;top:415.598px" width="7" height="9" viewBox="0 0 8 10"><path d="M1 .6h4l2.400 2.400v6.400h-6.400z" fill="#9ad59a" stroke="#1c1c9c" stroke-width="1.100"/><path d="M2.300 4.200h3.200M2.300 5.800h3.200M2.300 7.400h3.200" stroke="#1c4a6c" stroke-width=".8"/></svg>
<div style="left:29px;top:428.43100000000004px;width:981px;height:16.33299999999997px;background:linear-gradient(to right,#ffffff 0%,#fbfdfa 9%,#e3f0e0 18%,#cfe6cc 28%,#b7d9b4 43%,#a9d4a6 60%,#93c991 80%,#7fbd7c 100%);"></div>
<div style="left:29px;top:443.764px;width:981px;height:1px;background:rgba(255,255,255,.6);"></div>
<span class="t" style="left:30.80px;top:430.58px;font-size:11px;color:#ee6a5c;transform:scaleX(0.9367);">4/22/2005 11:49:20 ...</span>
<span class="t" style="left:134.60px;top:430.58px;font-size:11px;color:#ee6a5c;transform:scaleX(0.9704);">MR\AU\P...</span>
<span class="t" style="left:255.50px;top:430.58px;font-size:11px;color:#ee6a5c;transform:scaleX(0.9000);">369</span>
<span class="t" style="left:297.40px;top:430.58px;font-size:11px;color:#ee6a5c;transform:scaleX(0.9179);">UCLA HEAD 3T^ROUTINE</span>
<span class="t" style="left:435.20px;top:430.58px;font-size:11px;color:#ee6a5c;transform:scaleX(0.9160);">FELIX</span>
<span class="t" style="left:627.20px;top:430.58px;font-size:11px;color:#ee6a5c;transform:scaleX(0.9065);">MRBRWW</span>
<div style="left:742px;top:428.43100000000004px;width:15px;height:15.33299999999997px;background:rgba(244,244,248,.9);"></div>
<svg style="left:745.3px;top:431.93100000000004px" width="7" height="9" viewBox="0 0 8 10"><path d="M1 .6h4l2.400 2.400v6.400h-6.400z" fill="#0a52e6" stroke="#1c1c9c" stroke-width="1.100"/><path d="M2.300 4.500h3M2.300 6.500h3" stroke="#5c8cf4" stroke-width=".8"/></svg>
<div style="left:757px;top:428.43100000000004px;width:14px;height:15.33299999999997px;background:rgba(244,244,248,.55);"></div>
<svg style="left:759px;top:431.43100000000004px" width="11" height="10" viewBox="0 0 11 10"><path d="M.5 3.200h2.200l2.800-2.500v8.600l-2.800-2.500h-2.200z" fill="#6a86d8" stroke="#2c3cb0" stroke-width=".9"/><path d="M7 2.500l2.500-1.800M7.300 5h3M7 7.500l2.500 1.800" stroke="#3c50c0" stroke-width="1"/></svg>
<div style="left:29px;top:444.764px;width:981px;height:17.23599999999999px;background:linear-gradient(to right,#ffffff 0%,#fbfdfa 9%,#e3f0e0 18%,#cfe6cc 28%,#b7d9b4 43%,#a9d4a6 60%,#93c991 80%,#7fbd7c 100%);"></div>
<div style="left:29px;top:461.0px;width:981px;height:1px;background:rgba(255,255,255,.6);"></div>
<span class="t" style="left:30.80px;top:446.91px;font-size:11px;color:#ee6a5c;transform:scaleX(0.9313);">9/27/2005 3:49:52 P...</span>
<span class="t" style="left:134.60px;top:446.91px;font-size:11px;color:#ee6a5c;transform:scaleX(0.8925);">CT\AU\PR...</span>
<span class="t" style="left:255.50px;top:446.91px;font-size:11px;color:#ee6a5c;transform:scaleX(0.9000);">749</span>
<span class="t" style="left:297.40px;top:446.91px;font-size:11px;color:#ee6a5c;transform:scaleX(0.8470);">CT2 TÊTE, FACE, SINUS</span>
<span class="t" style="left:435.20px;top:446.91px;font-size:11px;color:#ee6a5c;transform:scaleX(0.8293);">PHELPS</span>
<span class="t" style="left:627.20px;top:446.91px;font-size:11px;color:#ee6a5c;transform:scaleX(0.7948);">CTTETE</span>
<div style="left:742px;top:444.764px;width:15px;height:16.23599999999999px;background:rgba(244,244,248,.9);"></div>
<svg style="left:745.3px;top:448.264px" width="7" height="9" viewBox="0 0 8 10"><path d="M1 .6h4l2.400 2.400v6.400h-6.400z" fill="#9ad59a" stroke="#1c1c9c" stroke-width="1.100"/><path d="M2.300 4.200h3.200M2.300 5.800h3.200M2.300 7.400h3.200" stroke="#1c4a6c" stroke-width=".8"/></svg>
<div style="left:757px;top:444.764px;width:14px;height:16.23599999999999px;background:rgba(244,244,248,.55);"></div>
<svg style="left:759px;top:447.764px" width="11" height="10" viewBox="0 0 11 10"><path d="M.5 3.200h2.200l2.800-2.500v8.600l-2.800-2.500h-2.200z" fill="#6a86d8" stroke="#2c3cb0" stroke-width=".9"/><path d="M7 2.500l2.500-1.800M7.300 5h3M7 7.500l2.500 1.800" stroke="#3c50c0" stroke-width="1"/></svg>
<div style="left:2px;top:145px;width:12px;height:1px;background:#262626;"></div>
<div style="left:2px;top:262px;width:12px;height:1px;background:#262626;"></div>
<div style="left:2px;top:280px;width:12px;height:1px;background:#262626;"></div>
<div style="left:2px;top:298px;width:12px;height:1px;background:#262626;"></div>
<div style="left:2px;top:163.1px;width:12px;height:1px;background:#262626;"></div>
<div style="left:2px;top:179.433px;width:12px;height:1px;background:#262626;"></div>
<div style="left:2px;top:195.766px;width:12px;height:1px;background:#262626;"></div>
<div style="left:2px;top:212.099px;width:12px;height:1px;background:#262626;"></div>
<div style="left:2px;top:228.432px;width:12px;height:1px;background:#262626;"></div>
<div style="left:2px;top:244.765px;width:12px;height:1px;background:#262626;"></div>
<div style="left:2px;top:314.1px;width:12px;height:1px;background:#262626;"></div>
<div style="left:2px;top:330.433px;width:12px;height:1px;background:#262626;"></div>
<div style="left:2px;top:346.766px;width:12px;height:1px;background:#262626;"></div>
<div style="left:2px;top:363.09900000000005px;width:12px;height:1px;background:#262626;"></div>
<div style="left:2px;top:379.432px;width:12px;height:1px;background:#262626;"></div>
<div style="left:2px;top:395.765px;width:12px;height:1px;background:#262626;"></div>
<div style="left:2px;top:412.098px;width:12px;height:1px;background:#262626;"></div>
<div style="left:2px;top:428.43100000000004px;width:12px;height:1px;background:#262626;"></div>
<div style="left:2px;top:444.764px;width:12px;height:1px;background:#262626;"></div>
<svg style="left:6.300px;top:185.23299999999998px" width="3.600" height="5.600" viewBox="0 0 5 7"><polygon points="0.500,0.500 4.500,3.500 0.500,6.500" fill="#cfcfcf"/></svg>
<svg style="left:6.300px;top:201.56599999999997px" width="3.600" height="5.600" viewBox="0 0 5 7"><polygon points="0.500,0.500 4.500,3.500 0.500,6.500" fill="#cfcfcf"/></svg>
<div style="left:0px;top:462px;width:1010px;height:3px;background:#2a2a2a;"></div>
<div style="left:0px;top:465px;width:1010px;height:10px;background:#48474f;"></div>
<div style="left:0px;top:465px;width:13px;height:10px;background:#333;"></div>
<svg style="left:5.500px;top:467.800px" width="3" height="4.400" viewBox="0 0 4 5"><polygon points="0,2.500 4,0 4,5" fill="#999"/></svg>
<div style="left:13px;top:466px;width:560px;height:8px;background:linear-gradient(to bottom,#0a3c54 0%,#0c6484 45%,#0c6484 55%,#0a3c54 100%);"></div>
<div style="left:997px;top:465px;width:13px;height:10px;background:#333;"></div>
<svg style="left:1002.500px;top:467.800px" width="3" height="4.400" viewBox="0 0 4 5"><polygon points="4,2.500 0,0 0,5" fill="#999"/></svg>
<div style="left:1009.5px;top:97px;width:1px;height:30px;background:#454545;"></div>
<div style="left:1010px;top:98px;width:12px;height:377px;background:#48474f;"></div>
<div style="left:1010px;top:98px;width:12px;height:12px;background:#333;"></div>
<svg style="left:1013.700px;top:102.500px" width="4.600" height="3" viewBox="0 0 6 4"><polygon points="0,4 3,0 6,4" fill="#8a8a8a"/></svg>
<div style="left:1013px;top:118px;width:6px;height:26px;background:linear-gradient(to right,#0a4860,#0c6484 50%,#0a4860);"></div>
<div style="left:1010px;top:451px;width:12px;height:12px;background:#333;"></div>
<svg style="left:1013.700px;top:455.500px" width="4.600" height="3" viewBox="0 0 6 4"><polygon points="0,0 3,4 6,0" fill="#9a9a9a"/></svg>
<div style="left:1010px;top:463px;width:12px;height:12px;background:#333;"></div>
<div style="left:0px;top:475px;width:1024px;height:10px;background:#333333;"></div>
<div style="left:0px;top:477px;width:1024px;height:6px;background:#3a3a3a;"></div>
<div style="left:0px;top:485px;width:1024px;height:2px;background:#262626;"></div>
<div style="left:1px;top:487px;width:137px;height:99px;background:#333333;"></div>
<div style="left:1px;top:487px;width:137px;height:17px;background:#000;"></div>
<span class="t" style="left:34.50px;top:487.50px;font-size:11px;color:#f1f1f1;transform:scaleX(0.8816);">December 2014</span>
<svg style="left:7.300px;top:492.300px" width="3.600" height="7" viewBox="0 0 5 8"><polygon points="0,4 5,0 5,8" fill="#fff"/></svg>
<svg style="left:127px;top:492.300px" width="3.600" height="7" viewBox="0 0 5 8"><polygon points="5,4 0,0 0,8" fill="#fff"/></svg>
<span class="t" style="left:21.13px;top:503.00px;font-size:11px;color:#e0e0e0;transform:scaleX(0.9200);">S</span>
<span class="t" style="left:34.48px;top:503.00px;font-size:11px;color:#e0e0e0;transform:scaleX(0.9200);">M</span>
<span class="t" style="left:54.31px;top:503.00px;font-size:11px;color:#e0e0e0;transform:scaleX(0.9200);">T</span>
<span class="t" style="left:66.82px;top:503.00px;font-size:11px;color:#e0e0e0;transform:scaleX(0.9200);">W</span>
<span class="t" style="left:86.71px;top:503.00px;font-size:11px;color:#e0e0e0;transform:scaleX(0.9200);">T</span>
<span class="t" style="left:102.91px;top:503.00px;font-size:11px;color:#e0e0e0;transform:scaleX(0.9200);">F</span>
<span class="t" style="left:119.33px;top:503.00px;font-size:11px;color:#e0e0e0;transform:scaleX(0.9200);">S</span>
<div style="left:12px;top:518px;width:116px;height:1px;background:#b4b4b4;"></div>
<div style="left:12px;top:518px;width:1px;height:68px;background:#b4b4b4;"></div>
<span class="t" style="left:3.74px;top:520.00px;font-size:8.5px;color:#d4d4d4;transform:scaleX(0.8000);">49</span>
<span class="t" style="left:15.88px;top:520.00px;font-size:11px;color:#6e6e6e;transform:scaleX(0.9500);">30</span>
<span class="t" style="left:37.69px;top:520.00px;font-size:11px;color:#f1f1f1;transform:scaleX(0.9500);">1</span>
<span class="t" style="left:54.69px;top:520.00px;font-size:11px;color:#f1f1f1;transform:scaleX(0.9500);">2</span>
<span class="t" style="left:70.19px;top:520.00px;font-size:11px;color:#f1f1f1;transform:scaleX(0.9500);">3</span>
<span class="t" style="left:87.19px;top:520.00px;font-size:11px;color:#f1f1f1;transform:scaleX(0.9500);">4</span>
<span class="t" style="left:103.69px;top:520.00px;font-size:11px;color:#f1f1f1;transform:scaleX(0.9500);">5</span>
<span class="t" style="left:120.19px;top:520.00px;font-size:11px;color:#f1f1f1;transform:scaleX(0.9500);">6</span>
<span class="t" style="left:3.74px;top:534.80px;font-size:8.5px;color:#d4d4d4;transform:scaleX(0.8000);">50</span>
<span class="t" style="left:21.69px;top:534.80px;font-size:11px;color:#f1f1f1;transform:scaleX(0.9500);">7</span>
<span class="t" style="left:37.69px;top:534.80px;font-size:11px;color:#f1f1f1;transform:scaleX(0.9500);">8</span>
<span class="t" style="left:54.69px;top:534.80px;font-size:11px;color:#f1f1f1;transform:scaleX(0.9500);">9</span>
<span class="t" style="left:64.38px;top:534.80px;font-size:11px;color:#f1f1f1;transform:scaleX(0.9500);">10</span>
<span class="t" style="left:82.15px;top:534.80px;font-size:11px;color:#f1f1f1;transform:scaleX(0.9500);">11</span>
<span class="t" style="left:97.88px;top:534.80px;font-size:11px;color:#f1f1f1;transform:scaleX(0.9500);">12</span>
<span class="t" style="left:114.38px;top:534.80px;font-size:11px;color:#f1f1f1;transform:scaleX(0.9500);">13</span>
<span class="t" style="left:3.74px;top:549.60px;font-size:8.5px;color:#d4d4d4;transform:scaleX(0.8000);">51</span>
<span class="t" style="left:15.88px;top:549.60px;font-size:11px;color:#f1f1f1;transform:scaleX(0.9500);">14</span>
<span class="t" style="left:31.88px;top:549.60px;font-size:11px;color:#f1f1f1;transform:scaleX(0.9500);">15</span>
<span class="t" style="left:48.88px;top:549.60px;font-size:11px;color:#f1f1f1;transform:scaleX(0.9500);">16</span>
<span class="t" style="left:64.38px;top:549.60px;font-size:11px;color:#f1f1f1;transform:scaleX(0.9500);">17</span>
<div style="left:79px;top:550px;width:17px;height:15px;background:#3d9bcb;"></div>
<span class="t" style="left:81.38px;top:549.60px;font-size:11px;color:#0f3a5a;transform:scaleX(0.9500);">18</span>
<span class="t" style="left:97.88px;top:549.60px;font-size:11px;color:#f1f1f1;transform:scaleX(0.9500);">19</span>
<span class="t" style="left:114.38px;top:549.60px;font-size:11px;color:#f1f1f1;transform:scaleX(0.9500);">20</span>
<span class="t" style="left:3.74px;top:564.40px;font-size:8.5px;color:#d4d4d4;transform:scaleX(0.8000);">52</span>
<span class="t" style="left:15.88px;top:564.40px;font-size:11px;color:#f1f1f1;transform:scaleX(0.9500);">21</span>
<span class="t" style="left:31.88px;top:564.40px;font-size:11px;color:#f1f1f1;transform:scaleX(0.9500);">22</span>
<span class="t" style="left:48.88px;top:564.40px;font-size:11px;color:#f1f1f1;transform:scaleX(0.9500);">23</span>
<span class="t" style="left:64.38px;top:564.40px;font-size:11px;color:#f1f1f1;transform:scaleX(0.9500);">24</span>
<span class="t" style="left:81.38px;top:564.40px;font-size:11px;color:#f1f1f1;transform:scaleX(0.9500);">25</span>
<span class="t" style="left:97.88px;top:564.40px;font-size:11px;color:#f1f1f1;transform:scaleX(0.9500);">26</span>
<span class="t" style="left:114.38px;top:564.40px;font-size:11px;color:#f1f1f1;transform:scaleX(0.9500);">27</span>
<span class="t" style="left:7.52px;top:579.20px;font-size:8.5px;color:#d4d4d4;transform:scaleX(0.8000);">1</span>
<span class="t" style="left:15.88px;top:579.20px;font-size:11px;color:#f1f1f1;transform:scaleX(0.9500);">28</span>
<span class="t" style="left:31.88px;top:579.20px;font-size:11px;color:#f1f1f1;transform:scaleX(0.9500);">29</span>
<span class="t" style="left:48.88px;top:579.20px;font-size:11px;color:#f1f1f1;transform:scaleX(0.9500);">30</span>
<span class="t" style="left:64.38px;top:579.20px;font-size:11px;color:#f1f1f1;transform:scaleX(0.9500);">31</span>
<span class="t" style="left:87.19px;top:579.20px;font-size:11px;color:#6e6e6e;transform:scaleX(0.9500);">1</span>
<span class="t" style="left:103.69px;top:579.20px;font-size:11px;color:#6e6e6e;transform:scaleX(0.9500);">2</span>
<span class="t" style="left:120.19px;top:579.20px;font-size:11px;color:#6e6e6e;transform:scaleX(0.9500);">3</span>
<div style="left:138px;top:487px;width:2px;height:99px;background:#3a3a3a;"></div>
<div style="left:140px;top:487px;width:1.5px;height:99px;background:#202020;"></div>
<div style="left:142px;top:487px;width:869px;height:87px;background:#333333;"></div>
<span class="t" style="left:173.19px;top:539.00px;font-size:11px;color:#e8e8e8;transform:scaleX(0.9500);">30</span>
<div style="left:170px;top:555px;width:19px;height:1px;background:#9a9a9a;"></div>
<span class="t" style="left:173.19px;top:557.00px;font-size:11px;color:#e8e8e8;transform:scaleX(0.9500);">45</span>
<div style="left:193px;top:487px;width:198.5px;height:29.7px;background:#8a8a6e;"></div>
<span class="t" style="left:223.75px;top:488.00px;font-size:11px;color:#ffffff;transform:scaleX(0.8470);font-weight:bold;">DELL - DELL-PT-TEST (DEPT1)</span>
<div style="left:193px;top:516.7px;width:198.5px;height:21px;background:#2a2e28;"></div>
<span class="t" style="left:240.75px;top:520.00px;font-size:11px;color:#f1f1f1;transform:scaleX(0.8790);">Thursday, December 18</span>
<div style="left:193px;top:537.7px;width:5px;height:36.3px;background:#585858;"></div>
<div style="left:198px;top:537.7px;width:193.5px;height:36.3px;background:#cfdc99;"></div>
<div style="left:198px;top:555px;width:193.5px;height:1px;background:#767e58;"></div>
<div style="left:399.5px;top:487px;width:198.5px;height:29.7px;background:#59754f;"></div>
<span class="t" style="left:414.75px;top:488.00px;font-size:11px;color:#e2e6dc;transform:scaleX(0.8029);">TEST FACILITY - QA-RESOURCE (TESA)</span>
<div style="left:399.5px;top:516.7px;width:198.5px;height:21px;background:#2a2e28;"></div>
<span class="t" style="left:447.25px;top:520.00px;font-size:11px;color:#f1f1f1;transform:scaleX(0.8790);">Thursday, December 18</span>
<div style="left:399.5px;top:537.7px;width:5px;height:36.3px;background:#585858;"></div>
<div style="left:404.5px;top:537.7px;width:193.5px;height:36.3px;background:#cfdc99;"></div>
<div style="left:404.5px;top:555px;width:193.5px;height:1px;background:#767e58;"></div>
<div style="left:391.5px;top:487px;width:8px;height:87px;background:#333333;"></div>
<div style="left:393.0px;top:487px;width:5.7px;height:87px;background:#212121;"></div>
<div style="left:606px;top:487px;width:198.5px;height:29.7px;background:#8c7b65;"></div>
<span class="t" style="left:647.25px;top:488.00px;font-size:11px;color:#e2e6dc;transform:scaleX(0.8731);">FACILITYONLY - XA (QA1)</span>
<div style="left:606px;top:516.7px;width:198.5px;height:21px;background:#2a2e28;"></div>
<span class="t" style="left:653.75px;top:520.00px;font-size:11px;color:#f1f1f1;transform:scaleX(0.8790);">Thursday, December 18</span>
<div style="left:606px;top:537.7px;width:5px;height:36.3px;background:#585858;"></div>
<div style="left:611px;top:537.7px;width:193.5px;height:36.3px;background:#cfdc99;"></div>
<div style="left:611px;top:555px;width:193.5px;height:1px;background:#767e58;"></div>
<div style="left:598px;top:487px;width:8px;height:87px;background:#333333;"></div>
<div style="left:599.5px;top:487px;width:5.7px;height:87px;background:#212121;"></div>
<div style="left:813px;top:487px;width:198.5px;height:29.7px;background:#59754f;"></div>
<span class="t" style="left:870.75px;top:488.00px;font-size:11px;color:#e2e6dc;transform:scaleX(0.8559);">IMAGE1 - CT (CT1)</span>
<div style="left:813px;top:516.7px;width:198.5px;height:21px;background:#2a2e28;"></div>
<span class="t" style="left:860.75px;top:520.00px;font-size:11px;color:#f1f1f1;transform:scaleX(0.8790);">Thursday, December 18</span>
<div style="left:813px;top:537.7px;width:5px;height:36.3px;background:#585858;"></div>
<div style="left:818px;top:537.7px;width:193.5px;height:36.3px;background:#cfdc99;"></div>
<div style="left:818px;top:555px;width:193.5px;height:1px;background:#767e58;"></div>
<div style="left:805px;top:487px;width:8px;height:87px;background:#333333;"></div>
<div style="left:806.5px;top:487px;width:5.7px;height:87px;background:#212121;"></div>
<div style="left:1011px;top:487px;width:12px;height:87px;background:#48474f;"></div>
<div style="left:1011px;top:487px;width:12px;height:12px;background:#2c2c2c;"></div>
<svg style="left:1014.700px;top:491.500px" width="4.600" height="3" viewBox="0 0 6 4"><polygon points="0,4 3,0 6,4" fill="#9a9a9a"/></svg>
<div style="left:1011px;top:562px;width:12px;height:12px;background:#2c2c2c;"></div>
<svg style="left:1014.700px;top:566.500px" width="4.600" height="3" viewBox="0 0 6 4"><polygon points="0,0 3,4 6,0" fill="#9a9a9a"/></svg>
<div style="left:1015px;top:520px;width:5px;height:11px;background:#0c6484;"></div>
<div style="left:142px;top:574px;width:881px;height:11px;background:#48474f;"></div>
<div style="left:142.5px;top:574px;width:13px;height:11px;background:#5a5a5a;border:1px solid #9aa4ac;"></div>
<svg style="left:142.5px;top:574.500px" width="13" height="10" viewBox="0 0 13 10"><path d="M3.200 2.500v5" stroke="#e8e8e8" stroke-width="1.200"/><path d="M7 2.500L4 5L7 7.500zM10.300 2.500L7.300 5L10.300 7.500z" fill="#e8e8e8"/></svg>
<div style="left:155.7px;top:574px;width:13px;height:11px;background:#0a3a5e;border:1px solid #9aa4ac;"></div>
<svg style="left:155.7px;top:574.500px" width="13" height="10" viewBox="0 0 13 10"><path d="M9.800 2.500v5" stroke="#fff" stroke-width="1.200"/><path d="M6 2.500L9 5L6 7.500zM2.700 2.500L5.700 5L2.700 7.500z" fill="#fff"/></svg>
<div style="left:168.9px;top:574px;width:13px;height:11px;background:#0a3a5e;border:1px solid #9aa4ac;"></div>
<svg style="left:168.9px;top:574.500px" width="13" height="10" viewBox="0 0 13 10"><path d="M6.500 1.500v7M3 5h7" stroke="#fff" stroke-width="1.800"/></svg>
<div style="left:182.1px;top:574px;width:13px;height:11px;background:#0a3a5e;border:1px solid #9aa4ac;"></div>
<svg style="left:182.1px;top:574.500px" width="13" height="10" viewBox="0 0 13 10"><path d="M3 5h7" stroke="#fff" stroke-width="1.800"/></svg>
<div style="left:196px;top:574px;width:11px;height:11px;background:#333;"></div>
<svg style="left:200.500px;top:577.300px" width="3" height="4.400" viewBox="0 0 4 5"><polygon points="0,2.500 4,0 4,5" fill="#999"/></svg>
<div style="left:207.5px;top:575.5px;width:144px;height:8px;background:linear-gradient(to bottom,#0a3c54 0%,#0c6484 45%,#0c6484 55%,#0a3c54 100%);"></div>
<div style="left:999.5px;top:574px;width:11.5px;height:11px;background:#333;"></div>
<svg style="left:1004.500px;top:577.300px" width="3" height="4.400" viewBox="0 0 4 5"><polygon points="4,2.500 0,0 0,5" fill="#999"/></svg>
<div style="left:1011px;top:574px;width:13px;height:11px;background:#333333;"></div>
<div style="left:0px;top:585px;width:1024px;height:24px;background:#333333;"></div>
<div style="left:0px;top:585px;width:1024px;height:1.5px;background:#464646;"></div>
<span class="t" style="left:4.50px;top:592.00px;font-size:12px;color:#e6e6e6;transform:scaleX(0.8698);">M0</span>
<div style="left:55px;top:590px;width:1px;height:19px;background:#4a4a4a;"></div>
<span class="t" style="left:63.00px;top:592.00px;font-size:12px;color:#e6e6e6;transform:scaleX(0.9052);">ADMIN</span>
<div style="left:178.5px;top:590px;width:1px;height:19px;background:#4a4a4a;"></div>
<div style="left:1021.5px;top:590px;width:1px;height:19px;background:#4a4a4a;"></div>
<div style="left:455.4px;top:186.6px;width:166.39999999999998px;height:301.20000000000005px;background:#4b4b4b;box-shadow:1px 1px 3px rgba(0,0,0,.55);border-left:1px solid #404040;border-top:1px solid #404040;"></div>
<span class="t" style="left:489.400px;top:189.00px;font-size:9.500px;color:#f4f4f4;transform:scaleX(0.8821);">Open</span>
<span class="t" style="left:489.400px;top:207.30px;font-size:9.500px;color:#f4f4f4;transform:scaleX(0.9267);">Study Information</span>
<span class="t" style="left:489.400px;top:225.80px;font-size:9.500px;color:#f4f4f4;transform:scaleX(0.8933);">Customize Columns...</span>
<div style="left:478px;top:243.5px;width:137px;height:1px;background:#5f5f5f;"></div>
<span class="t" style="left:489.400px;top:246.70px;font-size:9.500px;color:#f4f4f4;transform:scaleX(0.8540);"><u>S</u>tatus</span>
<svg style="left:612.400px;top:251.79999999999998px" width="3.500" height="5.600" viewBox="0 0 4 6"><polygon points="0,0 4,3 0,6" fill="#f0f0f0"/></svg>
<span class="t" style="left:489.400px;top:265.00px;font-size:9.500px;color:#f4f4f4;transform:scaleX(0.8913);"><u>P</u>erforming Physician</span>
<svg style="left:612.400px;top:270.1px" width="3.500" height="5.600" viewBox="0 0 4 6"><polygon points="0,0 4,3 0,6" fill="#f0f0f0"/></svg>
<span class="t" style="left:489.400px;top:283.50px;font-size:9.500px;color:#f4f4f4;transform:scaleX(0.9239);">Performing Te<u>c</u>hnologist</span>
<svg style="left:612.400px;top:288.6px" width="3.500" height="5.600" viewBox="0 0 4 6"><polygon points="0,0 4,3 0,6" fill="#f0f0f0"/></svg>
<span class="t" style="left:489.400px;top:302.00px;font-size:9.500px;color:#f4f4f4;transform:scaleX(0.8642);"><u>R</u>eading Physician</span>
<svg style="left:612.400px;top:307.1px" width="3.500" height="5.600" viewBox="0 0 4 6"><polygon points="0,0 4,3 0,6" fill="#f0f0f0"/></svg>
<span class="t" style="left:489.400px;top:320.80px;font-size:9.500px;color:#f4f4f4;transform:scaleX(0.8741);">Re<u>f</u>erring Physician</span>
<svg style="left:612.400px;top:325.90000000000003px" width="3.500" height="5.600" viewBox="0 0 4 6"><polygon points="0,0 4,3 0,6" fill="#f0f0f0"/></svg>
<span class="t" style="left:489.400px;top:339.00px;font-size:9.500px;color:#f4f4f4;transform:scaleX(0.9211);"><u>T</u>ranscriptionist</span>
<svg style="left:612.400px;top:344.1px" width="3.500" height="5.600" viewBox="0 0 4 6"><polygon points="0,0 4,3 0,6" fill="#f0f0f0"/></svg>
<span class="t" style="left:489.400px;top:357.30px;font-size:9.500px;color:#f4f4f4;transform:scaleX(0.9135);">Priorit<u>y</u></span>
<svg style="left:612.400px;top:362.40000000000003px" width="3.500" height="5.600" viewBox="0 0 4 6"><polygon points="0,0 4,3 0,6" fill="#f0f0f0"/></svg>
<span class="t" style="left:489.400px;top:376.00px;font-size:9.500px;color:#f4f4f4;transform:scaleX(0.8961);"><u>M</u>erge Patient</span>
<div style="left:457px;top:393px;width:164.5px;height:18.5px;background:#0b9bf8;"></div>
<span class="t" style="left:489.400px;top:394.50px;font-size:9.500px;color:#f4f4f4;transform:scaleX(0.8863);"><u>L</u>ink Patient</span>
<span class="t" style="left:489.400px;top:413.00px;font-size:9.500px;color:#f4f4f4;transform:scaleX(0.9042);">Unlink Patient</span>
<span class="t" style="left:489.400px;top:431.00px;font-size:9.500px;color:#f4f4f4;transform:scaleX(0.8418);">Export ...</span>
<div style="left:478px;top:449.2px;width:137px;height:1px;background:#5f5f5f;"></div>
<span class="t" style="left:489.400px;top:452.00px;font-size:9.500px;color:#f4f4f4;transform:scaleX(0.8740);">Delete</span>
<span class="t" style="left:489.400px;top:470.40px;font-size:9.500px;color:#f4f4f4;transform:scaleX(0.9163);">Options</span>
<svg style="left:612.400px;top:475.5px" width="3.500" height="5.600" viewBox="0 0 4 6"><polygon points="0,0 4,3 0,6" fill="#f0f0f0"/></svg>
</body></html>
